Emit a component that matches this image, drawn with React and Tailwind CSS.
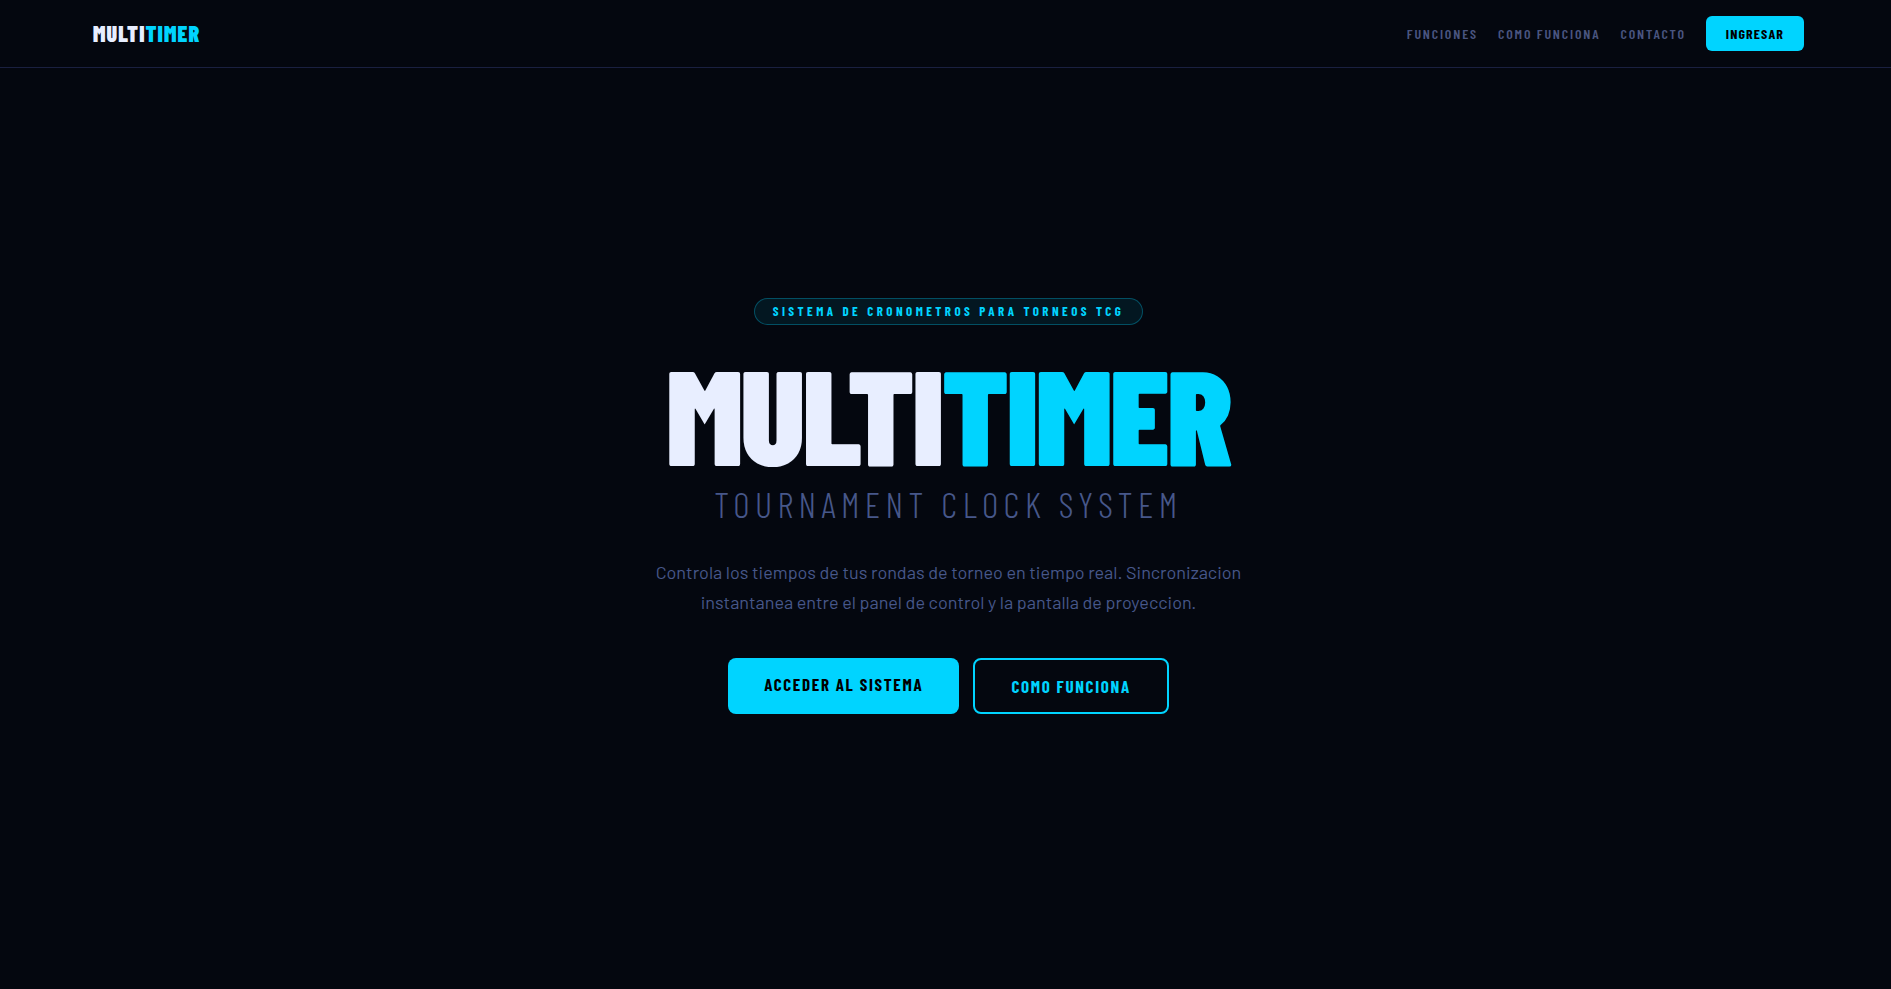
import React from 'react';

const navLinks = [
  { label: 'FUNCIONES', href: '#funciones' },
  { label: 'COMO FUNCIONA', href: '#como-funciona' },
  { label: 'CONTACTO', href: '#contacto' },
];

function Navbar() {
  return (
    <header className="flex items-center justify-between h-[68px] pl-[93px] pr-[87px] border-b border-[#1a2040]">
      <a href="#inicio" className="text-[22px] font-black tracking-[0.05em] text-[#e8eeff]">
        MULTI<span className="text-[#00d4ff]">TIMER</span>
      </a>
      <nav className="flex items-center gap-5">
        {navLinks.map((link) => (
          <a
            key={link.href}
            href={link.href}
            className="text-[14px] leading-5 font-semibold tracking-[0.13em] text-[#4a5580]"
          >
            {link.label}
          </a>
        ))}
        <a
          href="#ingresar"
          className="flex items-center h-[35px] px-5 rounded-md bg-[#00d4ff] text-[14px] font-bold tracking-[0.08em] text-black"
        >
          INGRESAR
        </a>
      </nav>
    </header>
  );
}

function Hero() {
  return (
    <main className="flex-1 flex flex-col items-center justify-center pl-1.5 pb-[45px] text-center">
      <div className="px-[18px] py-[3px] mb-[27px] rounded-full border border-[#00d4ff]/30 bg-[#00d4ff]/8 text-[13px] leading-[19px] font-bold tracking-[0.265em] text-[#00d4ff]">
        SISTEMA DE CRONOMETROS PARA TORNEOS TCG
      </div>

      <h1 className="text-[135px] leading-[120px] font-black tracking-[-0.02em] text-[#e8eeff]">
        MULTI<span className="text-[#00d4ff]">TIMER</span>
      </h1>
      <p className="mt-[11px] text-[36px] leading-[42px] font-light tracking-[0.15em] text-[#47578a]">
        TOURNAMENT CLOCK SYSTEM
      </p>

      <p className="mt-8 max-w-[600px] font-['Barlow','Roboto',sans-serif] text-[18px] leading-[30px] font-normal text-[#47578a]">
        Controla los tiempos de tus rondas de torneo en tiempo real. Sincronizacion
        instantanea entre el panel de control y la pantalla de proyeccion.
      </p>

      <div className="mt-[41px] flex gap-3.5">
        <a
          href="#ingresar"
          className="px-9 py-4 rounded-lg bg-[#00d4ff] text-[17px] leading-5 font-bold tracking-[0.1em] text-black"
        >
          ACCEDER AL SISTEMA
        </a>
        <a
          href="#como-funciona"
          className="px-9 py-4 rounded-lg border-2 border-[#00d4ff] text-[17px] leading-5 font-bold tracking-[0.1em] text-[#00d4ff]"
        >
          COMO FUNCIONA
        </a>
      </div>
    </main>
  );
}

export default function App() {
  return (
    <div className="min-h-screen flex flex-col bg-[#04070f] font-['Barlow_Condensed','Roboto_Condensed',sans-serif]">
      <Navbar />
      <Hero />
    </div>
  );
}
